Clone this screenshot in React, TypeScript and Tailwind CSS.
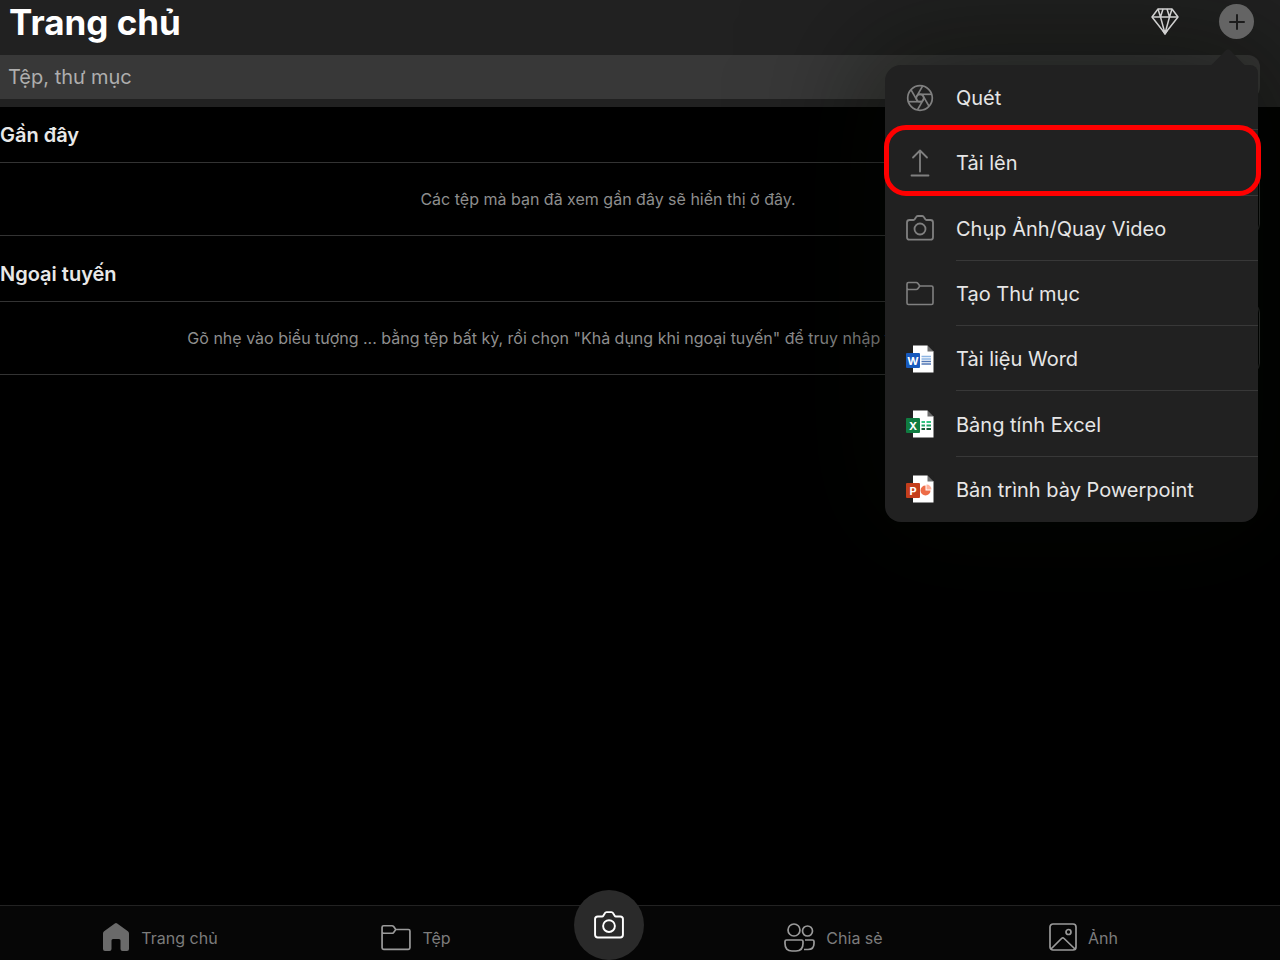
import React, { useState } from 'react';

type IconProps = { className?: string };

const DiamondIcon: React.FC<IconProps> = ({ className }) => (
  <svg viewBox="0 0 28 27" className={className} fill="none" stroke="currentColor" strokeWidth="1.5" strokeLinejoin="round" aria-hidden="true">
    <path d="M7 1h14l6 8-13 16.5L1 9z" />
    <path d="M1 9h26M12 1 9.5 9 14 25.5 18.5 9 16 1M7 1l2.500 8M21 1l-2.500 8" />
    <path d="m12.200 23 1.800 3 1.800-3z" fill="currentColor" />
  </svg>
);

const PlusIcon: React.FC<IconProps> = ({ className }) => (
  <svg viewBox="0 0 16 16" className={className} fill="none" stroke="currentColor" strokeWidth="2" strokeLinecap="round" aria-hidden="true">
    <path d="M8 1v14M1 8h14" />
  </svg>
);

const ApertureIcon: React.FC<IconProps> = ({ className }) => (
  <svg viewBox="0 0 28 28" className={className} fill="none" stroke="currentColor" strokeWidth="1.7" aria-hidden="true">
    <circle cx="14" cy="14" r="12.3" />
    <circle cx="14" cy="14" r="3.7" />
    {[0, 60, 120, 180, 240, 300].map(angle => (
      <path key={angle} d="M12 10.300H25.500" transform={`rotate(${angle} 14 14)`} />
    ))}
  </svg>
);

const UploadIcon: React.FC<IconProps> = ({ className }) => (
  <svg viewBox="0 0 28 28" className={className} fill="none" stroke="currentColor" strokeWidth="1.8" strokeLinecap="round" strokeLinejoin="round" aria-hidden="true">
    <path d="M14 22.500V1.500M7 8.500l7-7 7 7M5.500 26.500h17" />
  </svg>
);

const CameraIcon: React.FC<IconProps> = ({ className }) => (
  <svg viewBox="0 0 28 28" className={className} fill="none" stroke="currentColor" strokeWidth="1.8" strokeLinejoin="round" aria-hidden="true">
    <path d="M3.500 6h4q.8 0 1.200-.7l1.300-2.100Q10.600 2 11.800 2h4.400q1.200 0 1.800 1.200l1.300 2.100q.4.700 1.200.7h4Q27 6 27 8.500v14.700q0 2.500-2.500 2.500h-21Q1 25.700 1 23.200V8.500Q1 6 3.500 6z" />
    <circle cx="14" cy="15" r="5.5" />
  </svg>
);

const FolderIcon: React.FC<IconProps> = ({ className }) => (
  <svg viewBox="0 0 28 28" className={className} fill="none" stroke="currentColor" strokeWidth="1.6" strokeLinejoin="round" aria-hidden="true">
    <path d="M13.500 7H25.500Q27 7 27 8.500v15.500q0 1.500-1.500 1.500h-23Q1 25.500 1 24V5q0-1.500 1.500-1.500h7.700q1 0 1.600.8L13.800 7l-2 2.700q-.6.800-1.600.8H2.500Q1 10.500 1 9" />
  </svg>
);

const HomeIcon: React.FC<IconProps> = ({ className }) => (
  <svg viewBox="0 0 28 28" className={className} fill="currentColor" aria-hidden="true">
    <path d="M12.800.4q1.200-.8 2.400 0l10.700 7.800Q27 9 27 10.500V26q0 2-2 2h-4.500q-2 0-2-2v-8.500q0-1.500-1.500-1.500h-6q-1.500 0-1.500 1.500V26q0 2-2 2H3q-2 0-2-2V10.500Q1 9 2.100 8.200z" />
  </svg>
);

const PeopleIcon: React.FC<IconProps> = ({ className }) => (
  <svg viewBox="0 0 31 29" className={className} fill="none" stroke="currentColor" strokeWidth="1.700" strokeLinejoin="round" aria-hidden="true">
    <circle cx="10" cy="7" r="6" />
    <circle cx="23.500" cy="8" r="5" />
    <path d="M2.500 17h15q1.500 0 1.500 1.500v2q0 7.500-7 7.500H8q-7 0-7-7.500v-2Q1 17 2.500 17z" />
    <path d="M21 17h7.500q1.500 0 1.500 1.500v2q0 6-6 6h-4" />
  </svg>
);

const PhotoIcon: React.FC<IconProps> = ({ className }) => (
  <svg viewBox="0 0 28 28" className={className} fill="none" stroke="currentColor" strokeWidth="1.700" strokeLinejoin="round" aria-hidden="true">
    <rect x="1" y="1" width="26" height="26" rx="3" />
    <circle cx="19.500" cy="9" r="2.500" />
    <path d="m2 26 10.500-10.500q1.300-1.200 2.600 0L26 26" />
  </svg>
);

const OfficePage: React.FC<{ color: string; letter: string; children: React.ReactNode }> = ({ color, letter, children }) => (
  <svg viewBox="0 0 28 28" className="w-7 h-7" aria-hidden="true">
    <path d="M7 .5h14.500l6 6v21H7z" fill="#fff" />
    <path d="M21.500.5v6h6z" fill="#6b6b6b" />
    <path d="M21.500.5h6v6z" fill="#212121" />
    {children}
    <rect x="0" y="8" width="14" height="15" rx="1" fill={color} />
    <text x="7" y="19.500" textAnchor="middle" fontSize="11" fontWeight="700" fill="#fff">{letter}</text>
  </svg>
);

const WordIcon = () => (
  <OfficePage color="#185abd" letter="W">
    <path d="M15.500 11.500H25M15.500 14H25" stroke="#8db5e3" strokeWidth="1.300" />
    <path d="M15.500 16.500H25M15.500 19H25" stroke="#5277b5" strokeWidth="1.300" />
  </OfficePage>
);

const ExcelIcon = () => (
  <OfficePage color="#107c41" letter="X">
    <path d="M15.500 12H19m1.500 0H25" stroke="#33c481" strokeWidth="2" />
    <path d="M15.500 15.500H19m1.500 0H25" stroke="#21a366" strokeWidth="2" />
    <path d="M15.500 19H19m1.500 0H25" stroke="#185c37" strokeWidth="2" />
  </OfficePage>
);

const PowerpointIcon = () => (
  <OfficePage color="#c43e1c" letter="P">
    <path d="M19.500 10.500v5h5a5 5 0 1 1-5-5z" fill="#ed6c47" />
    <path d="M20.500 9.500a5 5 0 0 1 5 5h-5z" fill="#ffb09a" />
  </OfficePage>
);

const menuItems = [
  { label: 'Quét', icon: <ApertureIcon className="w-7 h-7" /> },
  { label: 'Tải lên', icon: <UploadIcon className="w-7 h-7" />, highlighted: true },
  { label: 'Chụp Ảnh/Quay Video', icon: <CameraIcon className="w-7 h-7" /> },
  { label: 'Tạo Thư mục', icon: <FolderIcon className="w-7 h-7" /> },
  { label: 'Tài liệu Word', icon: <WordIcon /> },
  { label: 'Bảng tính Excel', icon: <ExcelIcon /> },
  { label: 'Bản trình bày Powerpoint', icon: <PowerpointIcon /> },
];

const sections = [
  { title: 'Gần đây', message: 'Các tệp mà bạn đã xem gần đây sẽ hiển thị ở đây.' },
  {
    title: 'Ngoại tuyến',
    message: 'Gõ nhẹ vào biểu tượng ... bằng tệp bất kỳ, rồi chọn "Khả dụng khi ngoại tuyến" để truy nhập tệp khi ngoại tuyến',
  },
];

const CreateMenu: React.FC = () => (
  <div className="absolute z-20 top-[61px] -right-1 w-[373px] rounded-2xl rounded-tr-lg bg-[#212121] shadow-[0_0_120px_20px_rgba(5,9,3,0.5)]">
    <svg viewBox="0 0 36 17" className="absolute -top-4 right-3 w-9 h-[17px]" aria-hidden="true">
      <path d="M0 17 3 14.500 15.500 1.500q2.500-2.500 5 0L33 14.500l3 2.500z" fill="#212121" />
    </svg>
    <ul className="grid auto-rows-fr h-[457px]">
      {menuItems.map((item, index) => (
        <li key={item.label} className="relative">
          <button type="button" className="w-full h-full flex items-center pl-[21px] text-left text-[#808080]">
            {item.icon}
            <span className={`ml-[22px] pt-0.5 flex-1 h-full flex items-center text-xl text-[#e6e6e6] ${index < menuItems.length - 1 ? 'border-b border-[#383838]' : ''}`}>
              {item.label}
            </span>
          </button>
          {item.highlighted && (
            <span className="absolute z-10 -top-[5px] bottom-0 -left-px -right-[3px] border-[5px] border-[#ff0000] rounded-[22px] pointer-events-none" />
          )}
        </li>
      ))}
    </ul>
  </div>
);

const NavLink: React.FC<{ label: string; children: React.ReactNode }> = ({ label, children }) => (
  <a href="#" className="h-[46px] flex items-center justify-center gap-[11px] text-base text-[#7c7c7c]">
    {children}
    <span className="pt-0.5">{label}</span>
  </a>
);

const App: React.FC = () => {
  const [menuOpen, setMenuOpen] = useState(true);
  const [query, setQuery] = useState('');

  return (
    <div className="min-h-screen flex flex-col overflow-hidden bg-black text-white font-[Inter,'Noto_Sans',sans-serif]">
      <header className="bg-[#212121] pb-2">
        <div className="h-[43px] mb-3 pl-[9px] pr-[26px] flex items-center">
          <h1 className="flex-1 text-[35px] leading-10 font-bold">Trang chủ</h1>
          <button type="button" aria-label="Premium" className="relative z-30 mr-10 text-[#d0d0d0]">
            <DiamondIcon className="w-7 h-[27px]" />
          </button>
          <div className="relative">
            <button
              type="button"
              aria-label="Thêm"
              aria-expanded={menuOpen}
              onClick={() => setMenuOpen(open => !open)}
              className="relative z-30 w-[35px] h-[35px] rounded-full bg-[#646464] text-[#1c1c1c] flex items-center justify-center"
            >
              <PlusIcon className="w-4 h-4" />
            </button>
            {menuOpen && <CreateMenu />}
          </div>
        </div>
        <div className="mr-5">
          <input
            type="search"
            aria-label="Tệp, thư mục"
            placeholder="Tệp, thư mục"
            value={query}
            onChange={e => setQuery(e.target.value)}
            className="block w-full h-11 pl-2 rounded-r-xl bg-[#383838] text-xl text-white placeholder:text-[#aeaeae] outline-none"
          />
        </div>
      </header>

      <main className="flex-1 flex flex-col gap-2.5">
        {sections.map(section => (
          <section key={section.title}>
            <h2 className="h-[55px] flex items-center text-xl font-semibold text-[#e8e8e8]">{section.title}</h2>
            <div className="-ml-11 mr-5 h-[74px] flex items-center justify-center border border-[#333333] rounded-xl">
              <p className="text-base text-[#8e8e8e]">{section.message}</p>
            </div>
          </section>
        ))}
      </main>

      <nav className="h-[55px] pr-[75px] border-t border-[#222222] bg-[#060606] grid grid-rows-1 grid-cols-[320fr_192fr_193fr_257fr_243fr] items-end">
        <NavLink label="Trang chủ">
          <HomeIcon className="w-7 h-7 text-[#6a6a6a]" />
        </NavLink>
        <NavLink label="Tệp">
          <FolderIcon className="w-[30px] h-[30px] text-[#9a9a9a]" />
        </NavLink>
        <button type="button" aria-label="Máy ảnh" className="w-[70px] h-[70px] justify-self-center rounded-full bg-[#2a2a2a] flex items-center justify-center">
          <CameraIcon className="w-[30px] h-[30px]" />
        </button>
        <NavLink label="Chia sẻ">
          <PeopleIcon className="w-[31px] h-[29px] text-[#9a9a9a]" />
        </NavLink>
        <NavLink label="Ảnh">
          <PhotoIcon className="w-7 h-7 text-[#9a9a9a]" />
        </NavLink>
      </nav>
    </div>
  );
};

export default App;
